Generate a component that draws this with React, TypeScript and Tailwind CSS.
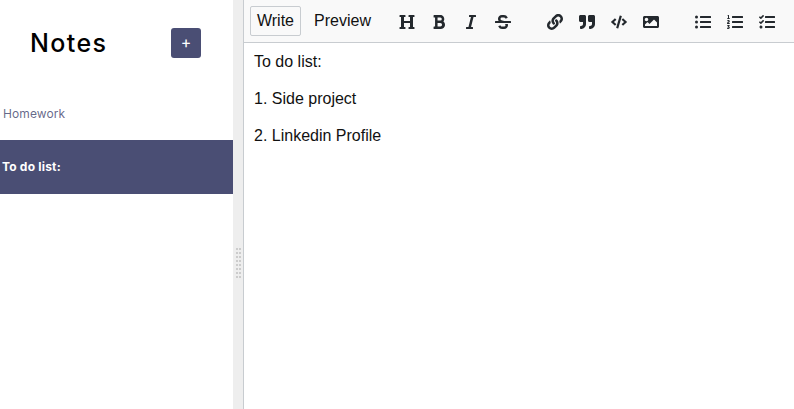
import React from "react";
import { FaHeading, FaBold, FaItalic, FaStrikethrough, FaLink, FaQuoteRight, FaCode, FaImage, FaListUl, FaListOl, FaTasks } from "react-icons/fa";

const groups = [
  [FaHeading, FaBold, FaItalic, FaStrikethrough],
  [FaLink, FaQuoteRight, FaCode, FaImage],
  [FaListUl, FaListOl, FaTasks],
];

function Sidebar() {
  return (
    <aside className="w-[233px] shrink-0 bg-white font-['Inter',sans-serif]">
      <header className="flex h-[87px] items-center justify-between pb-[2px] pl-[30px] pr-8">
        <h1 className="text-[25px] leading-[30px] font-medium tracking-[1.4px] text-black">Notes</h1>
        <button className="flex size-[30px] items-center justify-center rounded-[3px] bg-[#4a4e74] pb-px text-[16px] text-white">+</button>
      </header>
      <nav>
        <div className="flex h-[53px] items-center pl-[3px] text-[12px] tracking-[0.03em] text-[#4a4e74]/85"><span className="tracking-[0.1px]">Homework</span></div>
        <div className="flex h-[54px] items-center bg-[#4a4e74] pl-[2px] text-[12px] font-bold tracking-[0.2px] text-white">To do list:</div>
      </nav>
    </aside>
  );
}

function Gutter() {
  return (
    <div className="flex w-[10px] shrink-0 items-center bg-[#eee] pl-[3px]">
      <div className="mt-[117px] grid grid-cols-2 gap-x-px gap-y-[2px]">
        {Array.from({ length: 16 }, (_, i) => (
          <span key={i} className="size-[2px] bg-[#ccc]" />
        ))}
      </div>
    </div>
  );
}

export default function App() {
  return (
    <main className="flex h-[409px] w-[794px] overflow-hidden bg-white">
      <Sidebar />
      <Gutter />
      <section className="min-w-0 flex-1 border-l border-[#c8ccd0] font-['Liberation_Sans',Arial,sans-serif] text-[16px] text-[#111]">
        <div className="flex h-[43px] border-b border-[#c8ccd0] bg-[#f9f9f9]">
          <div className="flex pt-1.5 pl-1.5">
            <button className="h-[30px] w-[51px] rounded-[2px] border border-[#c8ccd0]">Write</button>
            <button className="ml-1 h-[30px] w-[75px]">Preview</button>
          </div>
          <div className="flex gap-9 pt-3.5 pl-[19px] text-[#24292e]">
            {groups.map((icons, g) => (
              <div key={g} className="flex gap-4">
                {icons.map((Icon, i) => (
                  <Icon key={i} className="size-4" />
                ))}
              </div>
            ))}
          </div>
        </div>
        <div className="space-y-[18px] pt-[9px] pl-2.5 leading-[19px]">
          <p>To do list:</p>
          <p>1. Side project</p>
          <p>2. Linkedin Profile</p>
        </div>
      </section>
    </main>
  );
}
